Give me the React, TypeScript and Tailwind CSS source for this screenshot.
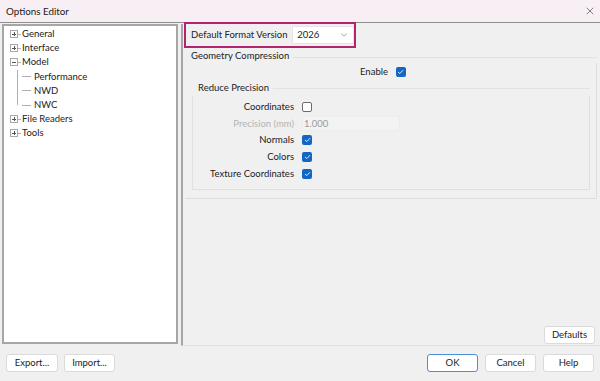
import { X, ChevronDown } from "lucide-react";

const font = { fontFamily: 'Lato, "Noto Sans", sans-serif' };

const Expander = ({ open }: { open?: boolean }) => (
  <span className="relative flex h-[8px] w-[8px] items-center justify-center border border-[#a8a8a8] bg-white">
    <span className="absolute h-[1px] w-[4px] bg-[#555]" />
    {!open && <span className="absolute h-[4px] w-[1px] bg-[#555]" />}
  </span>
);

const TreeNode = ({ label, open }: { label: string; open?: boolean }) => (
  <div className="flex h-[14.2px] items-center">
    <Expander open={open} />
    <span className="h-[1px] w-[3px] bg-[#b0b0b0]" />
    <span className="ml-[1px]">{label}</span>
  </div>
);

const Leaf = ({ label, last }: { label: string; last?: boolean }) => (
  <div className="relative flex h-[14.2px] items-center pl-[9px]">
    <span
      className={
        "absolute left-[4px] top-0 w-[1px] bg-[#b0b0b0] " +
        (last ? "h-[7px]" : "h-full")
      }
    />
    <span className="h-[1px] w-[9px] bg-[#b0b0b0]" />
    <span className="ml-[3px]">{label}</span>
  </div>
);

const Check = ({ on }: { on?: boolean }) =>
  on ? (
    <span className="flex h-[10px] w-[10px] items-center justify-center rounded-[2px] bg-[#1466c4]">
      <svg width="7" height="6" viewBox="0 0 7 6">
        <path d="M1 3 L2.8 4.6 L6 1.2" stroke="#dbe8f8" strokeWidth="1" fill="none" />
      </svg>
    </span>
  ) : (
    <span className="h-[10px] w-[10px] rounded-[2px] border border-[#6b6b6b] bg-white" />
  );

const Btn = ({ label, w, primary }: { label: string; w: string; primary?: boolean }) => (
  <div
    className={
      "flex h-[18px] items-center justify-center rounded-[3px] bg-white text-[9.5px] text-[#222] " +
      w +
      (primary ? " border border-[#4a90d9]" : " border border-[#dadada]")
    }
  >
    {label}
  </div>
);

const Row = ({
  label,
  children,
  dim,
}: {
  label: string;
  children: React.ReactNode;
  dim?: boolean;
}) => (
  <div className="flex h-[16.8px] items-center">
    <span
      className={
        "w-[109px] shrink-0 whitespace-nowrap pr-[8px] text-right " +
        (dim ? "text-[#b4b4b4]" : "text-[#222]")
      }
    >
      {label}
    </span>
    {children}
  </div>
);

export default function App() {
  return (
    <div
      className="flex h-[381px] w-[600px] flex-col overflow-hidden bg-[#f0f0f0] text-[9.5px] text-[#222]"
      style={font}
    >
      {/* title bar */}
      <div className="flex h-[23px] shrink-0 items-center justify-between border-b border-[#8e8e8e] bg-[#f7eff3] pl-[6px] pr-[4px]">
        <span className="text-[9.8px] text-[#1a1a1a]">Options Editor</span>
        <X size={12} strokeWidth={1.2} className="text-[#333]" />
      </div>

      <div className="flex h-[321px] shrink-0 pl-[2px] pt-[1px]">
        {/* tree */}
        <div className="h-[320px] w-[176px] border-2 border-[#a6a6a6] bg-white pl-[6px] pt-[1px]">
          <TreeNode label="General" />
          <TreeNode label="Interface" />
          <TreeNode label="Model" open />
          <div className="ml-[3px]">
            <Leaf label="Performance" />
            <Leaf label="NWD" />
            <Leaf label="NWC" last />
          </div>
          <TreeNode label="File Readers" />
          <TreeNode label="Tools" />
        </div>

        {/* right panel */}
        <div className="ml-[3px] flex h-[322px] flex-1 flex-col border-b border-l-2 border-[#a6a6a6] border-b-[#e2e2e2] pr-[3px]">
          <div className="-mt-[2px] ml-[1px] flex h-[26px] w-[172px] items-center border-2 border-[#b3246f] pl-[5px]">
            <span className="w-[102px] whitespace-nowrap">Default Format Version</span>
            <div className="flex h-[18px] w-[62px] items-center justify-between border border-[#e4e4e4] bg-white pl-[4px] pr-[4px]">
              <span>2026</span>
              <ChevronDown size={10} strokeWidth={1.2} className="text-[#444]" />
            </div>
          </div>

          {/* geometry compression */}
          <div className="ml-[2px] flex h-[151px] flex-col">
            <div className="flex items-center pt-[1px]">
              <span className="pl-[6px] pr-[4px]">Geometry Compression</span>
              <span className="mt-[3px] h-[1px] flex-1 bg-[#e2e2e2]" />
            </div>
            <div className="flex flex-1 flex-col border-b border-r border-[#dedede]">
              <div className="flex h-[18px] items-center pl-[175px]">
                <span className="pr-[8px]">Enable</span>
                <Check on />
              </div>
              <div className="ml-[7px] mr-[6px] flex flex-col">
                <div className="flex items-center">
                  <span className="pl-[6px] pr-[4px]">Reduce Precision</span>
                  <span className="h-[1px] flex-1 bg-[#e2e2e2]" />
                </div>
                <div className="h-[94px] border-b border-l border-r border-[#e0e0e0] pt-[3px]">
                  <Row label="Coordinates">
                    <Check />
                  </Row>
                  <Row label="Precision (mm)" dim>
                    <div className="flex h-[15px] w-[98px] items-center border border-[#ececec] bg-[#f3f3f3] pl-[1px] text-[#9a9a9a]">
                      1.000
                    </div>
                  </Row>
                  <Row label="Normals">
                    <Check on />
                  </Row>
                  <Row label="Colors">
                    <Check on />
                  </Row>
                  <Row label="Texture Coordinates">
                    <Check on />
                  </Row>
                </div>
              </div>
            </div>
          </div>

          <div className="flex flex-1 items-end justify-end pb-[1px] pr-[2px]">
            <Btn label="Defaults" w="w-[51px]" />
          </div>
        </div>
      </div>

      {/* bottom bar */}
      <div className="flex flex-1 items-start justify-between pl-[6px] pr-[6px] pt-[10px]">
        <div className="flex gap-[6px]">
          <Btn label="Export..." w="w-[52px]" />
          <Btn label="Import..." w="w-[51px]" />
        </div>
        <div className="flex gap-[7px]">
          <Btn label="OK" w="w-[51px]" primary />
          <Btn label="Cancel" w="w-[51px]" />
          <Btn label="Help" w="w-[51px]" />
        </div>
      </div>
    </div>
  );
}
